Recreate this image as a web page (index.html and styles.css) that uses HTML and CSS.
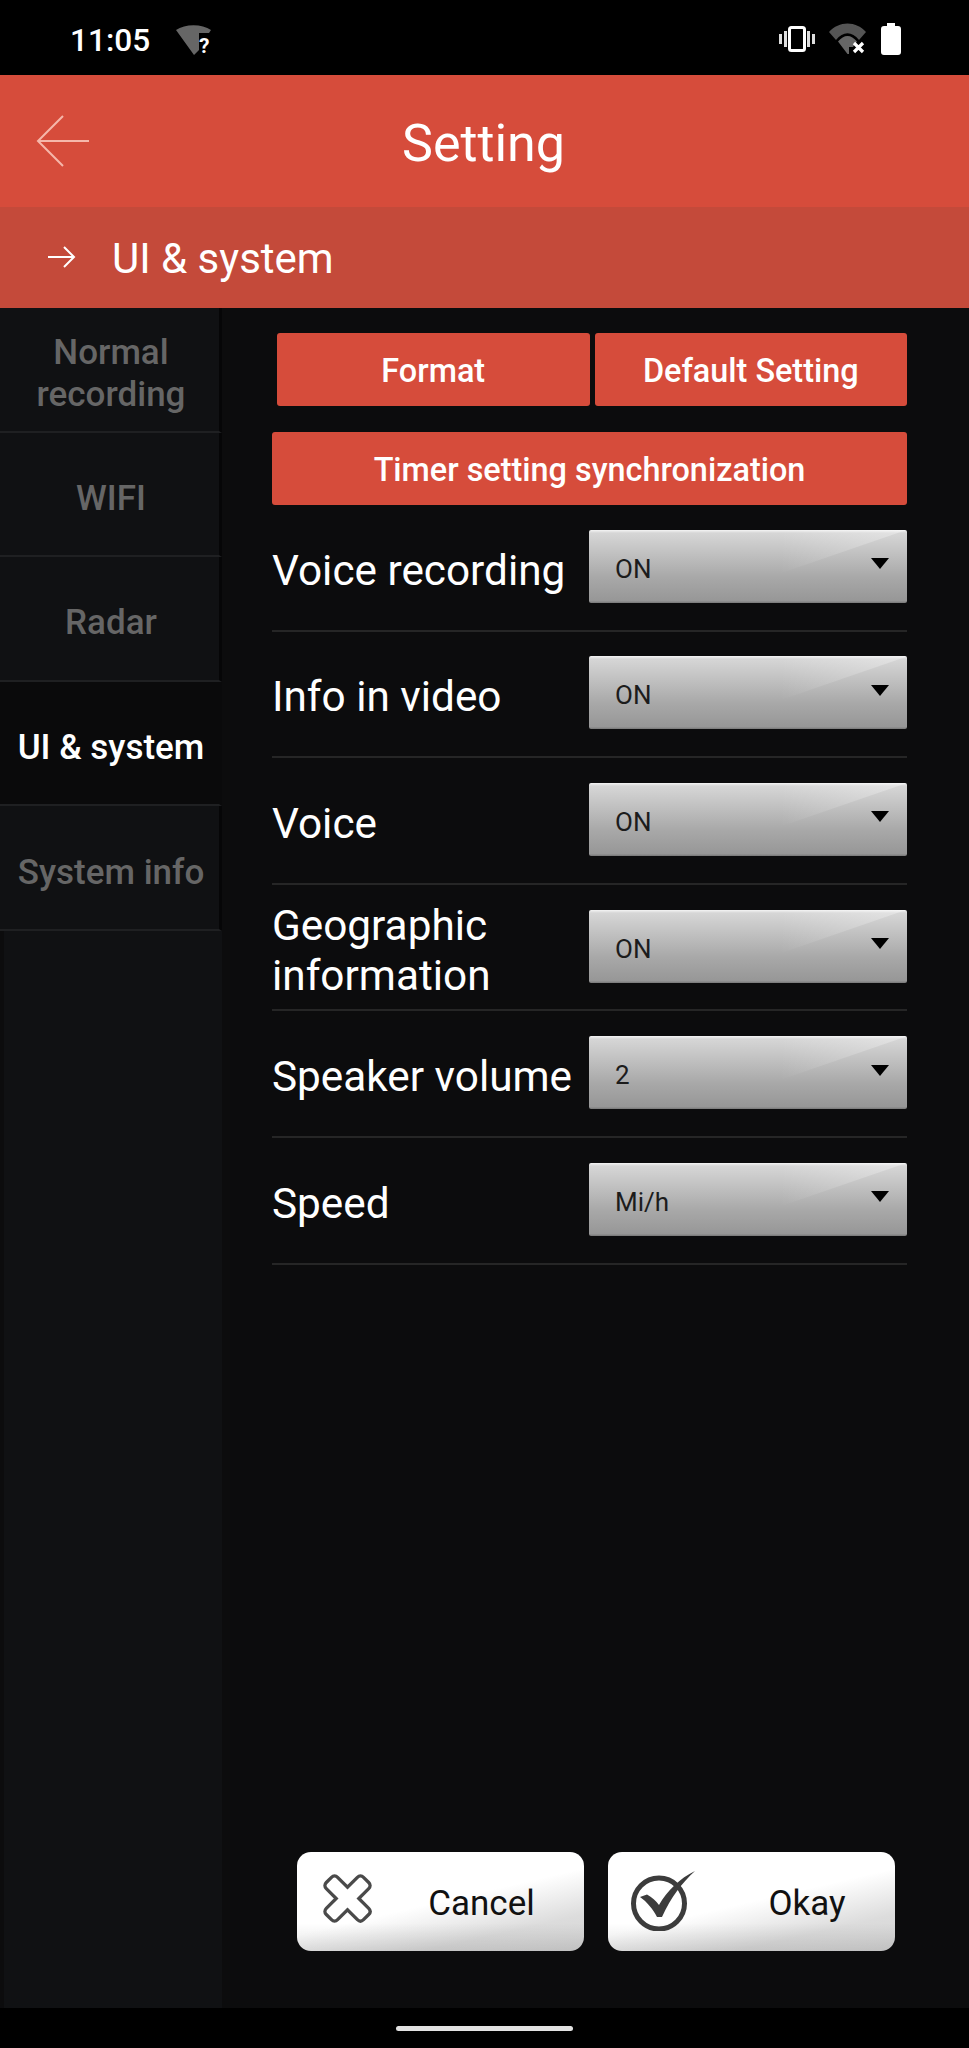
FILE: index.html
```html
<!DOCTYPE html>
<html lang="en">
<head>
<meta charset="utf-8">
<title>Setting</title>
<link rel="stylesheet" href="styles.css">
</head>
<body>
<div class="screen">
  <div class="status">
    <div class="status-left">
      <span class="clock">11:05</span>
      <svg class="ic-wifi-q" width="40" height="32" viewBox="0 0 40 32"><path d="M0 5C9-1.500 26-1.500 35 5L33 8H23V25L18 30Z" fill="#666"/><text x="23" y="28" class="q">?</text></svg>
    </div>
    <div class="status-right">
      <svg width="36" height="26" viewBox="0 0 36 26"><rect x="10.500" y="1.500" width="15" height="23" rx="2" fill="none" stroke="#fff" stroke-width="3"/><path d="M0 8h3v10H0zM5 5h3v16H5zM28 5h3v16h-3zM33 8h3v10h-3z" fill="#ddd"/></svg>
      <svg class="ic-wifi-x" width="38" height="32" viewBox="0 0 38 32"><path d="M0 9C10-2.500 27-2.500 37 9L30 17C23 8 14 8 7 17Z" fill="#555"/><path d="M9 18.500C15 11 22 11 28 18.500L24 24H20V31H18.500Z" fill="#666"/><path d="M25 20l9 9M34 20l-9 9" stroke="#fff" stroke-width="3.200" fill="none"/></svg>
      <svg width="20" height="32" viewBox="0 0 20 32"><path d="M6 0h8v3h3a3 3 0 0 1 3 3v23a3 3 0 0 1-3 3H3a3 3 0 0 1-3-3V6a3 3 0 0 1 3-3h3z" fill="#fff"/></svg>
    </div>
  </div>

  <header class="title-bar">
    <svg class="back" width="54" height="52" viewBox="0 0 54 52"><path d="M27 1L2 26L27 51M2 26H53" fill="none" stroke="#f6b7aa" stroke-width="2"/></svg>
    <h1 class="title">Setting</h1>
  </header>

  <div class="sub-bar">
    <svg width="28" height="22" viewBox="0 0 28 22"><path d="M16 1L26 11L16 21M0 11H26" fill="none" stroke="#fff" stroke-width="2"/></svg>
    <span class="sub-title">UI &amp; system</span>
  </div>

  <div class="body">
    <nav class="side">
      <div class="tab">Normal<br>recording</div>
      <div class="tab">WIFI</div>
      <div class="tab">Radar</div>
      <div class="tab active">UI &amp; system</div>
      <div class="tab">System info</div>
      <div class="side-rest"></div>
    </nav>

    <main class="panel">
      <div class="btn-row">
        <div class="red-btn">Format</div>
        <div class="red-btn">Default Setting</div>
      </div>
      <div class="red-btn wide">Timer setting synchronization</div>

      <div class="rows">
        <div class="row"><div class="label">Voice recording</div><div class="select"><span>ON</span><i class="caret"></i></div></div>
        <div class="row"><div class="label">Info in video</div><div class="select"><span>ON</span><i class="caret"></i></div></div>
        <div class="row"><div class="label">Voice</div><div class="select"><span>ON</span><i class="caret"></i></div></div>
        <div class="row"><div class="label">Geographic information</div><div class="select"><span>ON</span><i class="caret"></i></div></div>
        <div class="row"><div class="label">Speaker volume</div><div class="select"><span>2</span><i class="caret"></i></div></div>
        <div class="row"><div class="label">Speed</div><div class="select"><span>Mi/h</span><i class="caret"></i></div></div>
      </div>

      <div class="actions">
        <div class="action">
          <svg class="action-icon" width="49" height="49" viewBox="0 0 52 52"><path d="M9 3.500C11 1.500 13.500 1.500 15.500 3.500L26 14L36.500 3.500C38.500 1.500 41 1.500 43 3.500L48.500 9C50.500 11 50.500 13.500 48.500 15.500L38 26L48.500 36.500C50.500 38.500 50.500 41 48.500 43L43 48.500C41 50.500 38.500 50.500 36.500 48.500L26 38L15.500 48.500C13.500 50.500 11 50.500 9 48.500L3.500 43C1.500 41 1.500 38.500 3.500 36.500L14 26L3.500 15.500C1.500 13.500 1.500 11 3.500 9Z" fill="none" stroke="#4a4a4a" stroke-width="3.500"/></svg>
          <span class="action-text cancel-text">Cancel</span>
        </div>
        <div class="action">
          <svg class="action-icon check" width="66" height="62" viewBox="0 0 66 62"><circle cx="29" cy="34.500" r="25.500" fill="none" stroke="#3c3c3c" stroke-width="5"/><path d="M10 28L17 25.500C22 28 26 32 29 36C37 22 50 9 65 2C52 14 41 28 32 48H27C23 40 17 33 10 28Z" fill="#3c3c3c"/></svg>
          <span class="action-text okay-text">Okay</span>
        </div>
      </div>
    </main>
  </div>

  <div class="nav-bar"><div class="pill"></div></div>
</div>
</body>
</html>
```
FILE: styles.css
```css
* { box-sizing: border-box; }
html, body { margin: 0; padding: 0; background: #000; }
body { font-family: Roboto, "Liberation Sans", sans-serif; color: #fff; }

.screen { width: 969px; height: 2048px; display: flex; flex-direction: column; overflow: hidden; }

.status { height: 75px; background: #000; display: flex; justify-content: space-between; align-items: center; padding: 8px 68px 2px 70px; }
.status-left { display: flex; align-items: center; gap: 26px; }
.clock { font-size: 31.600px; font-weight: 500; color: #fff; line-height: 36px; }
.status-right { display: flex; align-items: center; gap: 14px; margin-top: -4px; }
.q { font: 700 21px Roboto, sans-serif; fill: #fff; }

.title-bar { height: 132px; background: #d64c3b; display: flex; align-items: center; padding-left: 36px; }
.back { flex: none; }
.title { margin: 0 0 0 312px; font-size: 52px; font-weight: 400; line-height: 60px; padding-top: 6px; }

.sub-bar { height: 101px; background: #c44a3a; display: flex; align-items: center; gap: 36px; padding-left: 48px; }
.sub-bar svg { margin-top: -2px; }
.sub-title { font-size: 42px; line-height: 48px; padding-top: 3px; }

.body { flex: 1; display: flex; background: #0c0c0d; min-height: 0; }

.side { width: 222px; flex: none; display: flex; flex-direction: column; }
.tab { height: 124.600px; display: flex; align-items: center; justify-content: center; text-align: center; font-size: 35px; line-height: 42px; font-weight: 500; color: #666; background: #101113; border-bottom: 2px solid #1f2022; border-right: 3px solid #060607; padding: 10px 0 0 3px; white-space: nowrap; }
.tab.active { color: #fff; background: #0a0a0b; border-right-color: #0a0a0b; }
.side-rest { flex: 1; margin-left: 4px; background: #101113; }

.panel { flex: 1; display: flex; flex-direction: column; padding: 25px 62px 57px 50px; min-width: 0; }
.btn-row { display: flex; gap: 5px; padding-left: 5px; }
.red-btn { flex: 1; height: 73px; background: #d64c3b; border-radius: 3px; display: flex; align-items: center; justify-content: center; font-size: 32.400px; font-weight: 500; padding-top: 2px; }
.red-btn.wide { flex: none; margin-top: 26px; }

.rows { display: flex; flex-direction: column; }
.row { height: 126.600px; display: flex; align-items: center; justify-content: space-between; border-bottom: 2px solid #262626; padding-bottom: 2px; }
.label { font-size: 42.300px; line-height: 50px; width: 310px; flex: none; padding-top: 9px; margin-right: -10px; }
.select { width: 318px; height: 73px; flex: none; position: relative; border-radius: 2px; background: linear-gradient(180deg, #f4f4f4 0, #d6d6d6 3px, #a8a8a8 65%, #979797 97%, #777 100%); color: #1c1c1c; font-size: 26px; display: flex; align-items: center; justify-content: space-between; padding: 5px 8px 0 26px; overflow: hidden; }
.select::before { content: ""; position: absolute; inset: 0; background: linear-gradient(90deg, rgba(255,255,255,0) 60%, rgba(255,255,255,.32) 100%); clip-path: polygon(60% 60%, 100% 0, 60% 0); }
.select span { position: relative; }
.caret { width: 0; height: 0; position: relative; top: -5px; right: 10px; border-left: 9.500px solid transparent; border-right: 9.500px solid transparent; border-top: 11px solid #000; }

.actions { margin-top: auto; display: flex; gap: 24px; padding-left: 25px; }
.action { width: 287px; height: 99px; border-radius: 14px; background: linear-gradient(180deg, rgba(0,0,0,0) 72%, rgba(0,0,0,.1) 100%), linear-gradient(167deg, #fff 50%, #dcdcdc 78%, #d6d6d6 100%); color: #111; display: flex; align-items: center; position: relative; }
.action-icon { position: absolute; left: 26px; top: 22px; }
.action-icon.check { left: 22px; top: 17px; }
.action-text { font-size: 35px; width: 100%; text-align: center; padding-top: 4px; }
.cancel-text { padding-left: 82px; }
.okay-text { padding-left: 111px; }

.nav-bar { height: 40px; background: #000; display: flex; justify-content: center; padding-top: 18px; }
.pill { width: 177px; height: 5px; border-radius: 3px; background: #e2e2e2; }
```
